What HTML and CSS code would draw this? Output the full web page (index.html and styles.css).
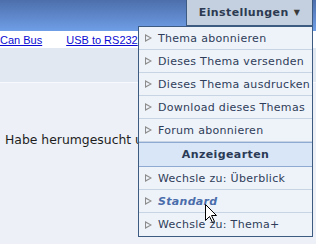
FILE: index.html
```html
<!DOCTYPE html>
<html lang="de">
<head>
  <meta charset="UTF-8">
  <title>Thema</title>
  <link rel="stylesheet" href="styles.css">
</head>
<body>

  <div class="topbar">
    <div class="settings-btn">Einstellungen <span class="caret">&#9660;</span></div>
  </div>

  <div class="navlinks">
    <a href="#">Can Bus</a>
    <a href="#">USB to RS232</a>
  </div>

  <div class="band"></div>

  <div class="content">
    <p>Habe herumgesucht und</p>
  </div>

  <!-- dropdown opened from Einstellungen -->
  <div class="dropdown">
    <div class="item"><span class="arrow"></span>Thema abonnieren</div>
    <div class="item"><span class="arrow"></span>Dieses Thema versenden</div>
    <div class="item"><span class="arrow"></span>Dieses Thema ausdrucken</div>
    <div class="item"><span class="arrow"></span>Download dieses Themas</div>
    <div class="item"><span class="arrow"></span>Forum abonnieren</div>
    <div class="dd-head">Anzeigearten</div>
    <div class="item"><span class="arrow"></span>Wechsle zu: Überblick</div>
    <div class="item"><span class="arrow"></span><span class="current">Standard</span></div>
    <div class="item last"><span class="arrow"></span>Wechsle zu: Thema+</div>
  </div>

  <svg class="cursor" width="13" height="20" viewBox="0 0 13 20">
    <path d="M0.5 0.5 L0.5 16.5 L4.5 12.5 L7.5 18.5 L9.5 17.5 L6.5 11.5 L11.5 11.5 Z" fill="#fff" stroke="#000" stroke-width="1"/>
  </svg>

</body>
</html>
```

FILE: styles.css
```css
body {
  margin: 0;
  padding: 0;
  width: 316px;
  height: 244px;
  overflow: hidden;
  position: relative;
  background: #edf1f7;
  font-family: "DejaVu Sans", Verdana, sans-serif;
}
.topbar {
  height: 31px;
  background: linear-gradient(#4d6fab, #6f9ee7);
  display: flex;
  justify-content: flex-end;
  padding-right: 3px;
}
.settings-btn {
  width: 127px;
  height: 26px;
  box-sizing: border-box;
  background: #c4d0df;
  border: 1px solid #3d5a80;
  border-top: none;
  color: #2c3a52;
  font-size: 11px;
  font-weight: bold;
  letter-spacing: 0.4px;
  display: flex;
  align-items: center;
  justify-content: center;
  gap: 5px;
}
.caret {
  font-size: 8px;
  color: #3a3a3a;
}
.navlinks {
  height: 17px;
  background: #fff;
  display: flex;
  gap: 24px;
  align-items: center;
  font-family: "Liberation Sans", Arial, sans-serif;
  font-size: 11px;
}
.navlinks a {
  color: #0a0ad2;
}
.band {
  height: 34px;
  background: #e1e8f1;
  border-bottom: 1px solid #f7f9fc;
}
.content {
  padding: 0 5px;
}
.content p {
  margin: 0;
  padding-top: 49px;
  font-size: 12.4px;
  color: #1e1e1e;
  white-space: nowrap;
}
.dropdown {
  position: absolute;
  left: 138px;
  top: 26px;
  width: 175px;
  box-sizing: border-box;
  background: #eef3f9;
  border: 1px solid #3d5a80;
}
.item {
  height: 22px;
  border-bottom: 1px solid #c7d4e3;
  display: flex;
  align-items: center;
  padding-left: 6px;
  font-size: 11px;
  letter-spacing: 0.3px;
  color: #2e3d5a;
  white-space: nowrap;
}
.item.last {
  border-bottom: none;
  height: 23px;
}
.arrow {
  width: 0;
  height: 0;
  border-top: 4px solid transparent;
  border-bottom: 4px solid transparent;
  border-left: 7px solid #8c8c8c;
  margin-right: 6px;
  position: relative;
}
.arrow::after {
  content: "";
  position: absolute;
  left: -6px;
  top: -2px;
  border-top: 2px solid transparent;
  border-bottom: 2px solid transparent;
  border-left: 4px solid #eef3f9;
}
.current {
  font-weight: bold;
  font-style: italic;
  color: #4a6dab;
}
.dd-head {
  height: 23px;
  background: #d9e6f7;
  border-top: 1px solid #8eaad3;
  border-bottom: 1px solid #8eaad3;
  display: flex;
  align-items: center;
  justify-content: center;
  font-size: 11px;
  font-weight: bold;
  letter-spacing: 0.4px;
  color: #2a3a56;
}
.cursor {
  position: absolute;
  left: 205px;
  top: 204px;
}
```
